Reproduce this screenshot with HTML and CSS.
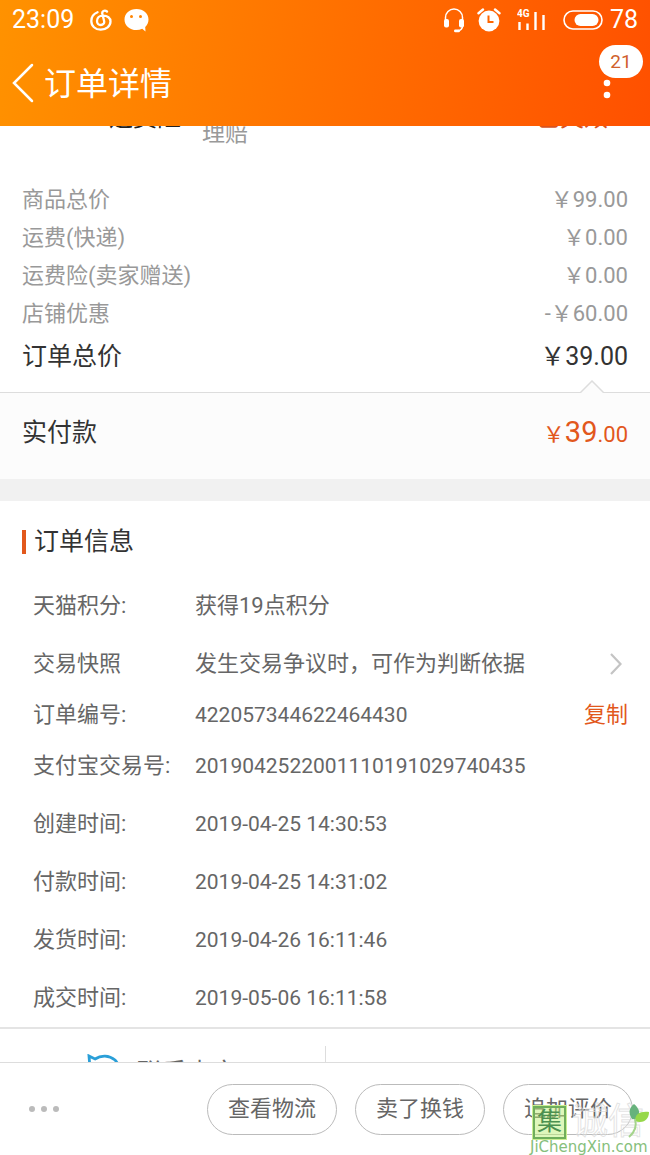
FILE: index.html
```
<!DOCTYPE html>
<html lang="zh-CN">
<head>
  <meta charset="UTF-8" />
  <meta name="viewport" content="width=device-width, initial-scale=1.0"/>
  <title>订单详情</title>
  <link rel="stylesheet" href="styles.css">
</head>
<body>

<header class="header">
  <div class="status-bar">
    <span class="clock">23:09</span>
    <svg class="icon-music" width="22" height="22" viewBox="0 0 22 22" fill="none" stroke="#fff" stroke-width="2.300" stroke-linecap="round">
      <path d="M7.500 3.200C3.700 4.700 1.300 8 1.300 12c0 5 4 8.700 9.400 8.700S20.500 17 20.500 12.500C20.500 9 17.500 6.600 13 6.600c-3.600 0-6 2.300-6 5.400 0 2.300 1.600 4 3.800 4 2.300 0 3.800-1.700 3.300-4L12.300 4.800C11.700 2.400 14.500.500 17 2.500"/>
    </svg>
    <svg class="icon-chat" width="25" height="23" viewBox="0 0 25 23">
      <path fill="#fff" d="M12.500 0C5.600 0 .500 4.500.500 10.400S5.600 21 12.500 21c2 0 4-.4 5.700-1.200L21.500 22.500l-.3-4.500c2-1.900 3.300-4.600 3.300-7.600C24.500 4.500 19.400 0 12.500 0z"/>
      <circle cx="7.500" cy="7.500" r="1.500" fill="#ff8400"/>
      <circle cx="16.500" cy="7.500" r="1.500" fill="#ff8400"/>
    </svg>
    <div class="status-right">
      <svg width="22" height="25" viewBox="0 0 22 25">
        <path d="M2.500 15V9.500a8.500 8.500 0 0 1 17 0V18c0 3-2 4.500-5 4.800" fill="none" stroke="#fff" stroke-width="1.500"/>
        <rect x="1" y="11" width="5" height="8.500" rx="2" fill="#fff"/>
        <rect x="16" y="11" width="5" height="8.500" rx="2" fill="#fff"/>
        <rect x="11" y="21.500" width="6" height="2.800" rx="1.400" fill="#fff"/>
      </svg>
      <svg class="icon-alarm" width="24" height="24" viewBox="0 0 24 24">
        <circle cx="12" cy="13" r="10.400" fill="#fff"/>
        <path d="M1.500 5.200L6 1.500M22.500 5.200L18 1.500" stroke="#fff" stroke-width="2.400" stroke-linecap="round"/>
        <path d="M11.500 7.500v6.500h5" fill="none" stroke="#ff6600" stroke-width="2"/>
      </svg>
      <svg class="icon-signal" width="29" height="22" viewBox="0 0 29 22">
        <text class="signal-text" x="0" y="8">4G</text>
        <path d="M2.500 13v8M10.500 14.500v6.500M18.500 3v18M26.500 6v15" stroke="#fff" stroke-width="2.400"/>
      </svg>
      <svg class="icon-battery" width="40" height="20" viewBox="0 0 40 20">
        <rect x="1" y="1" width="38" height="18" rx="9" fill="none" stroke="#fff" stroke-width="1.600"/>
        <rect x="11.500" y="4" width="24" height="12" rx="6" fill="#fff"/>
      </svg>
      <span class="battery-level">78</span>
    </div>
  </div>

  <div class="title-bar">
    <button class="back" aria-label="返回">
      <svg width="22" height="40" viewBox="0 0 22 40" fill="none" stroke="#fff" stroke-width="2.500" stroke-linecap="round">
        <path d="M20 2L2 20l18 18"/>
      </svg>
    </button>
    <h1>订单详情</h1>
    <button class="more" aria-label="更多">
      <svg width="8" height="32" viewBox="0 0 8 32" fill="#fff">
        <circle cx="4" cy="4" r="3.300"/>
        <circle cx="4" cy="16" r="3.300"/>
        <circle cx="4" cy="28" r="3.300"/>
      </svg>
      <span class="badge">21</span>
    </button>
  </div>
</header>

<main class="content">
  <div class="insurance">
    <span class="insurance-name">运费险</span>
    <span class="insurance-desc">理赔</span>
    <span class="insurance-state">已失效</span>
  </div>

  <dl class="summary">
    <div class="price-row"><dt>商品总价</dt><dd>￥99.00</dd></div>
    <div class="price-row"><dt>运费(快递)</dt><dd>￥0.00</dd></div>
    <div class="price-row"><dt>运费险(卖家赠送)</dt><dd>￥0.00</dd></div>
    <div class="price-row"><dt>店铺优惠</dt><dd>-￥60.00</dd></div>
    <div class="price-row total"><dt>订单总价</dt><dd>￥39.00</dd></div>
  </dl>

  <div class="paid">
    <svg class="paid-arrow" width="24" height="13" viewBox="0 0 24 13">
      <path d="M0 13L12 1l12 12" fill="#fcfcfc" stroke="#ddd" stroke-width="1.500"/>
    </svg>
    <span>实付款</span>
    <span class="paid-price">￥<b>39</b>.00</span>
  </div>

  <section class="info">
    <h2>订单信息</h2>
    <dl>
      <div class="info-row"><dt>天猫积分:</dt><dd>获得19点积分</dd></div>
      <div class="info-row">
        <dt>交易快照</dt><dd>发生交易争议时，可作为判断依据</dd>
        <svg class="chevron" width="12" height="22" viewBox="0 0 12 22" fill="none" stroke="#c4c4c4" stroke-width="2.200">
          <path d="M1 1l9.500 10L1 21"/>
        </svg>
      </div>
      <div class="info-row short"><dt>订单编号:</dt><dd class="num">422057344622464430</dd><button class="copy">复制</button></div>
      <div class="info-row"><dt>支付宝交易号:</dt><dd class="num">2019042522001110191029740435</dd></div>
      <div class="info-row"><dt>创建时间:</dt><dd class="num">2019-04-25 14:30:53</dd></div>
      <div class="info-row"><dt>付款时间:</dt><dd class="num">2019-04-25 14:31:02</dd></div>
      <div class="info-row"><dt>发货时间:</dt><dd class="num">2019-04-26 16:11:46</dd></div>
      <div class="info-row"><dt>成交时间:</dt><dd class="num">2019-05-06 16:11:58</dd></div>
    </dl>
  </section>

  <div class="contact">
    <a class="contact-item" href="#">
      <svg width="34" height="34" viewBox="0 0 34 34" fill="none" stroke="#2a9fd8" stroke-width="2.800">
        <path d="M3 14L2 2l6 3c6-4 14-4 20 1 5 5 5 14 0 20-6 6-16 6-21 0-3-3-5-7-4-12z"/>
      </svg>
      <span>联系卖家</span>
    </a>
    <span class="contact-item"></span>
  </div>
</main>

<footer class="footer">
  <button class="dots" aria-label="更多操作">
    <svg width="30" height="6" viewBox="0 0 30 6" fill="#bbb">
      <circle cx="3" cy="3" r="3"/>
      <circle cx="15" cy="3" r="3"/>
      <circle cx="27" cy="3" r="3"/>
    </svg>
  </button>
  <button class="action">查看物流</button>
  <button class="action">卖了换钱</button>
  <button class="action">追加评价</button>

  <div class="watermark">
    <div class="watermark-logo">
      <span class="watermark-box">集</span>
      <span class="watermark-name">诚信</span>
      <svg class="watermark-leaf" width="22" height="34" viewBox="0 0 22 34">
        <path d="M4 15C0 9 1 4 6 0c5 4 7 9 3 15z" fill="#67b27c"/>
        <path d="M7 17c0-7 5-10 14-9 0 7-5 12-14 9z" fill="#96d84a"/>
        <path d="M7 15c2 7 0 13-6 18" fill="none" stroke="#a5d48c" stroke-width="2"/>
      </svg>
    </div>
    <span class="watermark-url">JiChengXin.com</span>
  </div>
</footer>

</body>
</html>
```
FILE: styles.css
```
* { box-sizing: border-box; margin: 0; padding: 0; }
body {
  display: flex; flex-direction: column; height: 100vh; overflow: hidden;
  font-family: Roboto, "Noto Sans CJK SC", sans-serif; font-size: 22px; line-height: 32px;
  color: #666; background: #fff;
}
svg { display: block; flex: none; }
button { font: inherit; color: inherit; background: none; border: none; cursor: pointer; }

/* header */
.header { flex: none; color: #fff; background: linear-gradient(100deg, #ff9200, #ff5000); }
.status-bar { display: flex; align-items: center; height: 40px; padding: 0 12px; font-size: 25px; }
.icon-music { margin-left: 16px; }
.icon-chat { margin-left: 12px; }
.status-right { display: flex; align-items: center; margin-left: auto; }
.icon-alarm { margin-left: 12px; }
.icon-signal { margin-left: 16px; }
.icon-battery { margin: 0 7px 0 17px; }
.signal-text { font-size: 10px; font-weight: bold; fill: #fff; }
.title-bar { display: flex; align-items: center; height: 86px; padding: 0 12px; }
.back { margin-right: 10px; }
h1 { padding-top: 2px; font-size: 32px; font-weight: normal; line-height: 40px; }
.more { position: relative; margin: 0 27px 0 auto; }
.badge {
  position: absolute; left: -4px; top: -22px; width: 44px; height: 33px;
  border-radius: 17px; background: #fff; color: #d0602c; font-size: 19px; line-height: 33px;
}

/* scrolled list */
.content { flex: 1; min-height: 0; overflow: hidden; }
.insurance { display: flex; margin-top: -26px; padding: 0 42px 0 109px; font-size: 24px; line-height: 36px; }
.insurance-name { color: #222; }
.insurance-desc { margin-left: 21px; padding-top: 16px; color: #999; font-size: 23px; }
.insurance-state { margin-left: auto; color: #d9541e; }

.summary { padding: 29px 22px 14px; color: #999; }
.price-row { display: flex; justify-content: space-between; line-height: 38px; }
.total { padding-top: 3px; color: #333; font-size: 25px; line-height: 42px; }

.paid {
  position: relative; display: flex; justify-content: space-between; align-items: center;
  height: 87px; padding: 0 22px 6px; border-top: 1px solid #ddd;
  background: #fcfcfc; color: #333; font-size: 25px;
}
.paid-arrow { position: absolute; right: 46px; top: -13px; }
.paid-price { color: #e2581c; font-size: 22px; }
.paid-price b { font-size: 29px; font-weight: normal; }

.info { padding: 23px 22px 0; border-top: 22px solid #f1f1f1; }
.info h2 {
  display: flex; align-items: center; gap: 8px; margin-bottom: 17px;
  color: #333; font-size: 25px; font-weight: normal; line-height: 36px;
}
.info h2::before { content: ""; width: 4px; height: 24px; background: #e2581c; }
.info-row { display: flex; align-items: center; height: 58px; padding-left: 11px; }
.short { height: 44px; }
.info-row dt { width: 162px; flex: none; }
.num { font-size: 21px; }
.chevron { margin: 0 6px 0 auto; }
.copy { margin-left: auto; color: #e2581c; }

.contact { display: flex; padding-top: 17px; border-top: 2px solid #e4e4e4; }
.contact-item {
  display: flex; flex: 1; gap: 16px; height: 50px; padding: 8px 0 0 87px;
  color: #666; font-size: 25px; line-height: 38px; text-decoration: none;
}
.contact-item + .contact-item { border-left: 1px solid #ddd; }

/* bottom bar */
.footer {
  position: relative; display: flex; flex: none; align-items: center; gap: 18px;
  height: 93px; padding: 0 17px 0 29px; border-top: 1px solid #ddd; background: #fff;
}
.dots { margin-right: auto; }
.action { width: 130px; height: 51px; border: 1px solid #bbb; border-radius: 26px; }

.watermark { position: absolute; right: 0; bottom: 0; width: 120px; pointer-events: none; }
.watermark-logo { display: flex; align-items: center; gap: 6px; padding-left: 3px; }
.watermark-box {
  width: 33px; height: 33px; border: 2px solid #6fae5c; outline: 1px solid #c9ee90;
  background: rgba(190, 240, 120, 0.5); color: #4c9050;
  font-size: 25px; line-height: 28px; text-align: center;
}
.watermark-name {
  color: rgba(255, 255, 255, 0.3); font-size: 36px; line-height: 36px;
  -webkit-text-stroke: 1px rgba(215, 215, 215, 0.7);
}
.watermark-leaf { position: absolute; right: 0; top: 0; }
.watermark-url { display: block; color: #86c07c; font-family: "DejaVu Sans", sans-serif; font-size: 15px; line-height: 15px; }
```
